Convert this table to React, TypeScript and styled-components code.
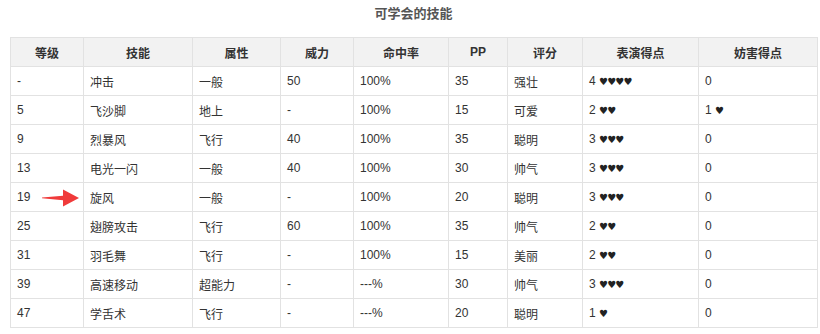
import styled, { createGlobalStyle } from 'styled-components';

const GlobalStyle = createGlobalStyle`
  body {
    margin: 0;
    background: #fff;
    font-family: Arial, "Liberation Sans", "Noto Sans CJK SC", sans-serif;
    color: #333;
  }
`;

const Wrapper = styled.div`
  padding: 0 3px 0 10px;
  width: 807px;
`;

const Title = styled.h3`
  margin: 0;
  height: 37px;
  padding-top: 6px;
  box-sizing: border-box;
  text-align: center;
  font-size: 13px;
  font-weight: bold;
  color: #555;
  line-height: 16px;
`;

const Table = styled.table`
  width: 807px;
  border-collapse: collapse;
  table-layout: fixed;
  font-size: 12px;
`;

const Th = styled.th`
  height: 28px;
  padding: 0;
  background: #f2f2f2;
  border: 1px solid #e2e2e2;
  font-weight: bold;
  color: #333;
  text-align: center;
`;

const Td = styled.td`
  position: relative;
  height: 28px;
  padding: 0 6px;
  border: 1px solid #e2e2e2;
  color: #333;
  text-align: left;
`;

const Hearts = styled.span`
  font-family: "DejaVu Sans", sans-serif;
  font-size: 10px;
  color: #222;
  letter-spacing: -0.8px;
`;

const Arrow = styled.svg`
  position: absolute;
  left: 31px;
  top: 6px;
`;

const columns: [string, number][] = [
  ['等级', 73],
  ['技能', 109],
  ['属性', 88],
  ['威力', 73],
  ['命中率', 95],
  ['PP', 59],
  ['评分', 75],
  ['表演得点', 116],
  ['妨害得点', 119],
];

type Row = [string, string, string, string, string, string, string, number, number];

const rows: Row[] = [
  ['-', '冲击', '一般', '50', '100%', '35', '强壮', 4, 0],
  ['5', '飞沙脚', '地上', '-', '100%', '15', '可爱', 2, 1],
  ['9', '烈暴风', '飞行', '40', '100%', '35', '聪明', 3, 0],
  ['13', '电光一闪', '一般', '40', '100%', '30', '帅气', 3, 0],
  ['19', '旋风', '一般', '-', '100%', '20', '聪明', 3, 0],
  ['25', '翅膀攻击', '飞行', '60', '100%', '35', '帅气', 2, 0],
  ['31', '羽毛舞', '飞行', '-', '100%', '15', '美丽', 2, 0],
  ['39', '高速移动', '超能力', '-', '---%', '30', '帅气', 3, 0],
  ['47', '学舌术', '飞行', '-', '---%', '20', '聪明', 1, 0],
];

const Score = ({ n }: { n: number }) =>
  n === 0 ? <>0</> : <>{n} <Hearts>{'♥'.repeat(n)}</Hearts></>;

const RedArrow = () => (
  <Arrow width="38" height="18" viewBox="0 0 38 18">
    <path d="M0 8.4 L21 6.8 L21 0.5 L37 9 L21 17.5 L21 11.2 L0 9.2 Z" fill="#f03a3a" />
  </Arrow>
);

const App = () => {
  return (
    <Wrapper>
      <GlobalStyle />
      <Title>可学会的技能</Title>
      <Table>
        <colgroup>
          {columns.map(([name, w]) => (
            <col key={name} style={{ width: w }} />
          ))}
        </colgroup>
        <thead>
          <tr>
            {columns.map(([name]) => (
              <Th key={name}>{name}</Th>
            ))}
          </tr>
        </thead>
        <tbody>
          {rows.map((r) => (
            <tr key={r[0] + r[1]}>
              <Td>
                {r[0]}
                {r[1] === '旋风' && <RedArrow />}
              </Td>
              <Td>{r[1]}</Td>
              <Td>{r[2]}</Td>
              <Td>{r[3]}</Td>
              <Td>{r[4]}</Td>
              <Td>{r[5]}</Td>
              <Td>{r[6]}</Td>
              <Td>
                <Score n={r[7]} />
              </Td>
              <Td>
                <Score n={r[8]} />
              </Td>
            </tr>
          ))}
        </tbody>
      </Table>
    </Wrapper>
  );
};

export default App;
